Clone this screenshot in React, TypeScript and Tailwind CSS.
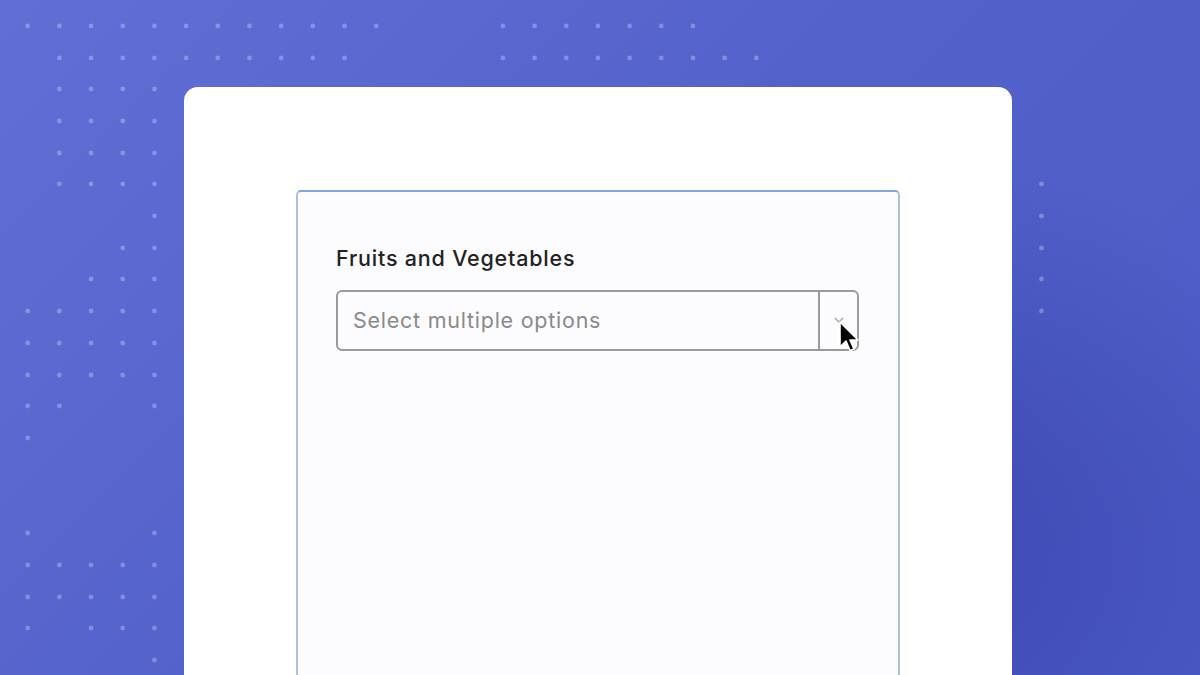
import React from 'react';

// dot rows: [y, list of column indexes]
const DOT_ROWS: [number, number[]][] = [
  [26, [0, 1, 2, 3, 4, 5, 6, 7, 8, 9, 10, 11, 15, 16, 17, 18, 19, 20, 21]],
  [58, [1, 2, 3, 4, 5, 6, 7, 8, 9, 10, 15, 16, 17, 18, 19, 20, 21, 22, 23]],
  [89, [1, 2, 3, 4]],
  [121, [1, 2, 3, 4]],
  [153, [1, 2, 3, 4]],
  [184, [1, 2, 3, 4, 32]],
  [216, [4, 31, 32]],
  [248, [3, 4, 31, 32]],
  [279, [2, 3, 4, 31, 32]],
  [311, [0, 1, 2, 3, 4, 31, 32]],
  [343, [0, 1, 2, 3, 4, 31]],
  [375, [0, 1, 2, 3, 4]],
  [406, [0, 1, 4]],
  [438, [0, 31]],
  [533, [0, 4]],
  [565, [0, 1, 2, 3, 4]],
  [597, [0, 1, 2, 3, 4]],
  [628, [0, 2, 3, 4]],
  [660, [4]],
];

function DotPattern() {
  return (
    <svg className="absolute inset-0 pointer-events-none" width="1200" height="675" viewBox="0 0 1200 675">
      {DOT_ROWS.flatMap(([y, cols]) =>
        cols.map((k) => (
          <circle key={`${y}-${k}`} cx={27.7 + 31.68 * k} cy={y} r="2.4" fill="#ffffff" fillOpacity="0.27" />
        ))
      )}
    </svg>
  );
}

function Cursor() {
  return (
    <svg className="absolute left-[838px] top-[320px]" width="24" height="38" viewBox="0 0 24 38">
      <path
        d="M2 2 L2 27 L8 21 L12 30.5 L16 29 L12 20 L20 20 Z"
        fill="#000000"
        stroke="#ffffff"
        strokeWidth="1.6"
        strokeLinejoin="round"
      />
    </svg>
  );
}

export default function App() {
  return (
    <div
      className="relative h-[675px] w-full overflow-hidden bg-[radial-gradient(ellipse_520px_400px_at_840px_540px,#3a46b1_0%,rgba(58,70,177,0)_100%),linear-gradient(135deg,#616ed5_0%,#5463cb_45%,#4c5bc6_100%)]"
      style={{ fontFamily: 'Inter, "Noto Sans", sans-serif' }}
    >
      <DotPattern />

      <div className="relative pl-[184px] pt-[87px]">
        <div className="h-[620px] w-[828px] rounded-t-[14px] bg-white pl-[112px] pt-[103px]">
          <div className="h-[600px] w-[604px] rounded-[5px] border-2 border-[#a9c1de] border-t-[#7ba8e2] bg-[#fcfbfe] px-[38px] pt-[52px]">
            <div className="text-[21.5px] font-medium leading-[28px] tracking-[0.8px] text-[#222222]">
              Fruits and Vegetables
            </div>
            <div className="mt-[18px] flex h-[61px] w-[523px] rounded-[6px] border-2 border-[#9a9a9a] bg-[#fcfbfe]">
              <div className="flex flex-1 items-center pl-[15px] text-[21.5px] tracking-[0.75px] text-[#8a8a8a]">
                Select multiple options
              </div>
              <div className="flex w-[39px] items-center justify-center border-l-2 border-[#9a9a9a]">
                <svg width="10" height="6" viewBox="0 0 10 6" className="mb-[2px]">
                  <polyline points="1,1 5,5 9,1" fill="none" stroke="#a0a0a0" strokeWidth="1.4" />
                </svg>
              </div>
            </div>
          </div>
        </div>
      </div>

      <Cursor />
    </div>
  );
}
